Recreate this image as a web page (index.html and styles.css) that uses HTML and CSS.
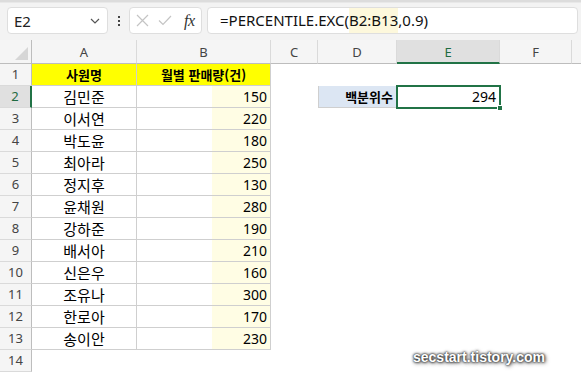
FILE: index.html
```html
<!DOCTYPE html>
<html lang="ko">
<head>
<meta charset="utf-8">
<link rel="stylesheet" href="styles.css">
</head>
<body>
<div class="app">
  <div class="topstrip"></div>
  <div class="fbar">
    <div class="namebox">
      <span class="ref">E2</span>
      <svg class="chev" width="10" height="6" viewBox="0 0 10 6"><path d="M1 1 L5 5 L9 1" fill="none" stroke="#555" stroke-width="1.2"/></svg>
    </div>
    <div class="dots"><i></i><i></i><i></i></div>
    <div class="iconbox">
      <svg width="13" height="13" viewBox="0 0 13 13"><path d="M1 1 L12 12 M12 1 L1 12" stroke="#c4c4c4" stroke-width="1.2" fill="none"/></svg>
      <svg width="14" height="11" viewBox="0 0 14 11"><path d="M1 5.5 L5 9.5 L13 1" stroke="#c4c4c4" stroke-width="1.2" fill="none"/></svg>
      <span class="fx">fx</span>
    </div>
    <div class="formula">=PERCENTILE.EXC(<span class="hl">B2:B13</span>,0.9)</div>
  </div>
  <div class="sheet">
    <div class="corner"><span class="tri"></span></div>
    <div class="ch">A</div><div class="ch">B</div><div class="ch">C</div><div class="ch">D</div><div class="ch sel">E</div><div class="ch">F</div><div class="ch last"></div>

    <div class="rh">1</div><div class="hd">사원명</div><div class="hd">월별 판매량(건)</div><div class="e"></div><div class="e"></div><div class="e"></div><div class="e"></div><div class="e"></div>
    <div class="rh sel">2</div><div class="nm">김민준</div><div class="num">150</div><div class="e"></div><div class="lbl">백분위수</div><div class="act">294<span class="handle"></span></div><div class="e"></div><div class="e"></div>
    <div class="rh">3</div><div class="nm">이서연</div><div class="num">220</div><div class="e"></div><div class="e"></div><div class="e"></div><div class="e"></div><div class="e"></div>
    <div class="rh">4</div><div class="nm">박도윤</div><div class="num">180</div><div class="e"></div><div class="e"></div><div class="e"></div><div class="e"></div><div class="e"></div>
    <div class="rh">5</div><div class="nm">최아라</div><div class="num">250</div><div class="e"></div><div class="e"></div><div class="e"></div><div class="e"></div><div class="e"></div>
    <div class="rh">6</div><div class="nm">정지후</div><div class="num">130</div><div class="e"></div><div class="e"></div><div class="e"></div><div class="e"></div><div class="e"></div>
    <div class="rh">7</div><div class="nm">윤채원</div><div class="num">280</div><div class="e"></div><div class="e"></div><div class="e"></div><div class="e"></div><div class="e"></div>
    <div class="rh">8</div><div class="nm">강하준</div><div class="num">190</div><div class="e"></div><div class="e"></div><div class="e"></div><div class="e"></div><div class="e"></div>
    <div class="rh">9</div><div class="nm">배서아</div><div class="num">210</div><div class="e"></div><div class="e"></div><div class="e"></div><div class="e"></div><div class="e"></div>
    <div class="rh">10</div><div class="nm">신은우</div><div class="num">160</div><div class="e"></div><div class="e"></div><div class="e"></div><div class="e"></div><div class="e"></div>
    <div class="rh">11</div><div class="nm">조유나</div><div class="num">300</div><div class="e"></div><div class="e"></div><div class="e"></div><div class="e"></div><div class="e"></div>
    <div class="rh">12</div><div class="nm">한로아</div><div class="num">170</div><div class="e"></div><div class="e"></div><div class="e"></div><div class="e"></div><div class="e"></div>
    <div class="rh">13</div><div class="nm">송이안</div><div class="num">230</div><div class="e"></div><div class="e"></div><div class="e"></div><div class="e"></div><div class="e"></div>
    <div class="rh">14</div><div class="e"></div><div class="e"></div><div class="e"></div><div class="e"></div><div class="e"></div><div class="e"></div><div class="e"></div>
  </div>
  <div class="watermark">secstart.tistory.com</div>
</div>
</body>
</html>
```
FILE: styles.css
```css
* { box-sizing: border-box; }
html, body { margin: 0; padding: 0; background: #fff; }
body { width: 581px; height: 376px; overflow: hidden; font-family: "Noto Sans", "Noto Sans CJK KR", sans-serif; }
.app { position: relative; width: 581px; height: 376px; background: #fff; }

.topstrip { height: 3px; background: #dcdcdc; border-bottom: 1px solid #e8e8e8; }
.fbar { display: flex; align-items: stretch; height: 37px; padding: 4px 3px 5px 7px; background: #f3f3f3; }
.namebox { width: 101px; height: 27px; background: #fff; border: 1px solid #dedede; border-radius: 4px; display: flex; align-items: center; justify-content: space-between; padding: 0 7px 0 6px; }
.ref { font-size: 15px; color: #222; }
.dots { width: 21px; display: flex; flex-direction: column; align-items: center; justify-content: center; gap: 2px; }
.dots i { display: block; width: 2px; height: 2px; background: #444; }
.iconbox { width: 73px; height: 27px; background: #fff; border: 1px solid #dedede; border-radius: 4px; display: flex; align-items: center; padding: 0 0 0 6px; gap: 9px; }
.fx { font-family: "Liberation Serif", serif; font-style: italic; font-size: 16px; color: #333; margin-left: 3px; letter-spacing: -0.5px; }
.formula { flex: 1; margin-left: 5px; height: 27px; background: #fff; border: 1px solid #dedede; border-radius: 4px; padding-left: 12px; font-size: 15px; line-height: 25px; color: #111; white-space: nowrap; overflow: hidden; }
.hl { background: #fdf8dc; display: inline-block; line-height: 25px; }

.sheet { display: grid; grid-template-columns: 32px 105px 134px 47px 79px 103px 72px 1fr; grid-template-rows: 24px repeat(14, 22px); }
.sheet > div { white-space: nowrap; overflow: hidden; line-height: 21px; }
.corner { background: #f5f5f5; border-right: 1px solid #bdbdbd; border-bottom: 1px solid #bdbdbd; position: relative; }
.tri { position: absolute; right: 3px; bottom: 3px; width: 0; height: 0; border-left: 13px solid transparent; border-bottom: 13px solid #d6d6d6; }
.ch { background: #f5f5f5; border-right: 1px solid #dadada; border-bottom: 1px solid #bdbdbd; text-align: center; font-size: 13px; color: #444; line-height: 24px !important; }
.ch.sel { background: #e0e0e0; color: #1e6b41; border-bottom: 2px solid #217346; }
.ch.last { border-right: none; }
.rh { background: #f5f5f5; border-right: 1px solid #bdbdbd; border-bottom: 1px solid #dadada; text-align: center; font-size: 13px; color: #444; }
.rh.sel { background: #e0e0e0; border-right: 2px solid #217346; color: #1e6b41; }
.hd { background: #ffff00; border-right: 1px solid #cfcfcf; border-bottom: 1px solid #cfcfcf; text-align: center; font-family: "Noto Sans CJK KR", sans-serif; font-weight: 700; font-size: 13px; color: #000; }
.nm { border-right: 1px solid #cfcfcf; border-bottom: 1px solid #cfcfcf; text-align: center; font-family: "Noto Sans CJK KR", sans-serif; font-size: 15px; color: #000; }
.num { border-right: 1px solid #cfcfcf; border-bottom: 1px solid #cfcfcf; text-align: right; padding-right: 3px; font-size: 14px; color: #000; background: linear-gradient(to right, #fff 75px, #fffde4 75px); }
.lbl { background: #dce6f3; border-right: 1px solid #cfcfcf; border-bottom: 1px solid #cfcfcf; border-left: 1px solid #cfcfcf; text-align: right; padding-right: 3px; font-family: "Noto Sans CJK KR", sans-serif; font-weight: 700; font-size: 13px; color: #000; }
.sheet > .act { overflow: visible; position: relative; outline: 2px solid #217346; outline-offset: -1px; text-align: right; padding-right: 4px; font-size: 14px; color: #000; }
.handle { position: absolute; right: -3px; bottom: -3px; width: 6px; height: 6px; background: #217346; border: 1px solid #fff; }

.watermark { position: absolute; left: 413px; top: 349px; font-family: "Liberation Sans", sans-serif; font-weight: 700; font-size: 14px; color: #fff; text-shadow: 0 0 2px #222, 0 0 3px #333, 1px 1px 4px #444; }
```
